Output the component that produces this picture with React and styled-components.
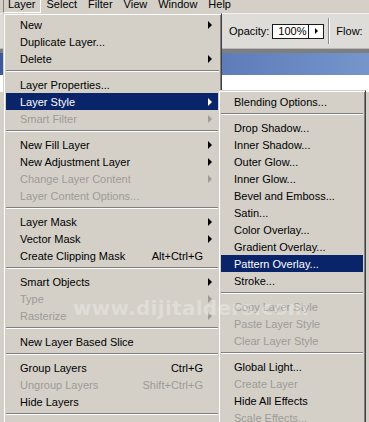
import React from 'react';
import styled, { createGlobalStyle, css } from 'styled-components';

const GlobalStyle = createGlobalStyle`
  html, body {
    margin: 0;
    padding: 0;
    background: #d4d0c8;
  }
  body {
    font-family: "Liberation Sans", Arial, sans-serif;
    font-size: 11px;
    color: #000;
  }
`;

const Screen = styled.div`
  position: relative;
  width: 369px;
  height: 422px;
  overflow: hidden;
  display: flex;
  flex-direction: column;
  background: #d4d0c8;
`;

const MenuBar = styled.div`
  display: flex;
  gap: 1px;
  height: 17px;
  margin-top: -4px;
  padding-left: 3px;
  flex-shrink: 0;
  background: #d4d0c8;
`;

const BarItem = styled.div`
  padding: 0 4px;
  line-height: 15px;
  border: 1px solid transparent;
  ${p => p.$pressed && css`
    border-color: #808080 #ffffff #ffffff #808080;
  `}
`;

const OptionsBar = styled.div`
  display: flex;
  align-items: center;
  height: 34px;
  padding-left: 229px;
  flex-shrink: 0;
  background: #dedcd8;
  border-top: 1px solid #f2f1ef;
`;

const OptLabel = styled.span`
  margin-right: ${p => p.$gap || 3}px;
  white-space: nowrap;
`;

const ValueBox = styled.div`
  display: flex;
  width: 52px;
  height: 15px;
  box-sizing: border-box;
  background: #fff;
  border: 1px solid #1a1a1a;
  flex-shrink: 0;
`;

const ValueText = styled.span`
  flex: 1;
  padding-left: 5px;
  line-height: 13px;
`;

const StepButton = styled.span`
  display: flex;
  align-items: center;
  justify-content: center;
  width: 14px;
  border-left: 1px solid #1a1a1a;

  &::after {
    content: '';
    border-left: 3px solid #000;
    border-top: 3px solid transparent;
    border-bottom: 3px solid transparent;
  }
`;

const BarDivider = styled.div`
  width: 1px;
  height: 26px;
  margin: 0 6px 0 4px;
  background: #8a8a8a;
  border-right: 1px solid #fff;
  flex-shrink: 0;
`;

const DarkRule = styled.div`
  height: 4px;
  flex-shrink: 0;
  background: #7e7e7e;
  border-top: 1px solid #b8b8b8;
`;

const PanelTitle = styled.div`
  height: 22px;
  flex-shrink: 0;
  background: linear-gradient(90deg, #3b5a9c 0%, #5876b4 50%, #7595cc 100%);
`;

const Workspace = styled.div`
  flex: 1;
  display: flex;
  flex-direction: column;
  background: #d4d0c8;
`;

const DocStrip = styled.div`
  height: 17px;
  background: #fff;
`;

const MenuPanel = styled.div`
  position: absolute;
  left: ${p => p.$left}px;
  top: ${p => p.$top}px;
  width: ${p => p.$width}px;
  z-index: ${p => p.$layer || 1};
  box-sizing: border-box;
  padding: 2px;
  background: #d4d0c8;
  border: 1px solid;
  border-color: #d4d0c8 #404040 #404040 #d4d0c8;
  box-shadow: inset 1px 1px 0 #ffffff, inset -1px -1px 0 #808080;
`;

const Item = styled.div`
  display: flex;
  align-items: center;
  height: 17px;
  padding-left: ${p => p.$indent}px;
  white-space: nowrap;
  color: ${p => (p.$active ? '#ffffff' : p.$disabled ? '#9d9b96' : '#000000')};
  background: ${p => (p.$active ? '#0a246a' : 'transparent')};
`;

const Label = styled.span`
  flex: 1;
`;

const Shortcut = styled.span`
  margin-left: 8px;
`;

const ArrowSlot = styled.span`
  display: flex;
  align-items: center;
  width: 16px;
  height: 100%;
  padding-left: 5px;
  box-sizing: border-box;
`;

const Arrow = styled.span`
  width: 0;
  height: 0;
  border-left: 4px solid currentColor;
  border-top: 4px solid transparent;
  border-bottom: 4px solid transparent;
`;

const Separator = styled.div`
  height: 0;
  margin: 3px 0 4px;
  border-top: 1px solid #808080;
  border-bottom: 1px solid #ffffff;
`;

const Watermark = styled.div`
  position: absolute;
  left: 73px;
  top: 298px;
  z-index: 5;
  font-family: "DejaVu Sans", "Liberation Sans", sans-serif;
  font-weight: bold;
  font-size: 20px;
  line-height: 20px;
  letter-spacing: 0.3px;
  color: rgba(255, 255, 255, 0.28);
  pointer-events: none;
  white-space: nowrap;
`;

const layerMenu = [
  { label: 'New', sub: true },
  { label: 'Duplicate Layer...' },
  { label: 'Delete', sub: true },
  '-',
  { label: 'Layer Properties...' },
  { label: 'Layer Style', sub: true, active: true },
  { label: 'Smart Filter', sub: true, disabled: true },
  '-',
  { label: 'New Fill Layer', sub: true },
  { label: 'New Adjustment Layer', sub: true },
  { label: 'Change Layer Content', sub: true, disabled: true },
  { label: 'Layer Content Options...', disabled: true },
  '-',
  { label: 'Layer Mask', sub: true },
  { label: 'Vector Mask', sub: true },
  { label: 'Create Clipping Mask', key: 'Alt+Ctrl+G' },
  '-',
  { label: 'Smart Objects', sub: true },
  { label: 'Type', sub: true, disabled: true },
  { label: 'Rasterize', sub: true, disabled: true },
  '-',
  { label: 'New Layer Based Slice' },
  '-',
  { label: 'Group Layers', key: 'Ctrl+G' },
  { label: 'Ungroup Layers', key: 'Shift+Ctrl+G', disabled: true },
  { label: 'Hide Layers' },
  '-',
  { label: 'Arrange', sub: true },
];

const styleMenu = [
  { label: 'Blending Options...' },
  '-',
  { label: 'Drop Shadow...' },
  { label: 'Inner Shadow...' },
  { label: 'Outer Glow...' },
  { label: 'Inner Glow...' },
  { label: 'Bevel and Emboss...' },
  { label: 'Satin...' },
  { label: 'Color Overlay...' },
  { label: 'Gradient Overlay...' },
  { label: 'Pattern Overlay...', active: true },
  { label: 'Stroke...' },
  '-',
  { label: 'Copy Layer Style', disabled: true },
  { label: 'Paste Layer Style', disabled: true },
  { label: 'Clear Layer Style', disabled: true },
  '-',
  { label: 'Global Light...' },
  { label: 'Create Layer', disabled: true },
  { label: 'Hide All Effects' },
  { label: 'Scale Effects...', disabled: true },
];

function Menu({ items, left, top, width, layer, indent, arrows }) {
  return (
    <MenuPanel $left={left} $top={top} $width={width} $layer={layer}>
      {items.map((it, i) =>
        it === '-' ? (
          <Separator key={i} />
        ) : (
          <Item key={i} $active={it.active} $disabled={it.disabled} $indent={indent}>
            <Label>{it.label}</Label>
            {it.key && <Shortcut>{it.key}</Shortcut>}
            {arrows && <ArrowSlot>{it.sub && <Arrow />}</ArrowSlot>}
          </Item>
        )
      )}
    </MenuPanel>
  );
}

const menuNames = ['Layer', 'Select', 'Filter', 'View', 'Window', 'Help'];

function App() {
  return (
    <>
      <GlobalStyle />
      <Screen>
        <MenuBar>
          {menuNames.map(name => (
            <BarItem key={name} $pressed={name === 'Layer'}>{name}</BarItem>
          ))}
        </MenuBar>
        <OptionsBar>
          <OptLabel>Opacity:</OptLabel>
          <ValueBox>
            <ValueText>100%</ValueText>
            <StepButton />
          </ValueBox>
          <BarDivider />
          <OptLabel $gap={6}>Flow:</OptLabel>
          <ValueBox>
            <ValueText>100%</ValueText>
            <StepButton />
          </ValueBox>
        </OptionsBar>
        <DarkRule />
        <PanelTitle />
        <Workspace>
          <DocStrip />
        </Workspace>

        <Menu items={layerMenu} left={3} top={13} width={219} indent={14} arrows />
        <Menu items={styleMenu} left={218} top={90} width={148} layer={2} indent={13} />
        <Watermark>www.dijitalders.com</Watermark>
      </Screen>
    </>
  );
}

export default App;
